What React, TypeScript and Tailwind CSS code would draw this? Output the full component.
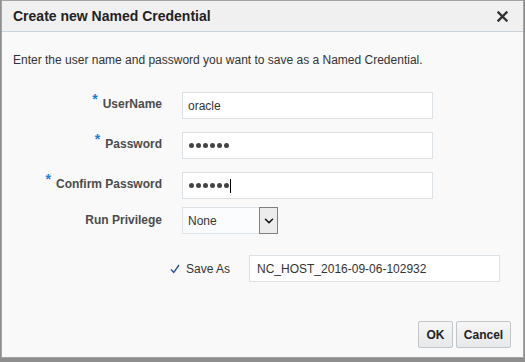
import { ChevronDown } from "lucide-react";

const font = { fontFamily: '"Liberation Sans", Arial, sans-serif' };

function Required() {
  return (
    <span className="relative -top-[4px] mr-[5px] text-[14px] font-bold text-[#1f7fd8]">*</span>
  );
}

function Dots({ count }: { count: number }) {
  return (
    <div className="flex items-center gap-[2px]">
      {Array.from({ length: count }).map((_, i) => (
        <span key={i} className="w-[5px] h-[5px] rounded-full bg-[#444]" />
      ))}
    </div>
  );
}

function FormRow({
  label,
  required,
  children,
}: {
  label: string;
  required?: boolean;
  children: React.ReactNode;
}) {
  return (
    <div className="flex items-center">
      <div
        className={
          required
            ? "relative -top-[2px] w-[149px] flex justify-end items-center text-[12px] font-bold text-[#4c4c4c]"
            : "relative -top-[1px] w-[149px] flex justify-end items-center text-[12px] font-bold text-[#4c4c4c]"
        }
      >
        {required && <Required />}
        <span>{label}</span>
      </div>
      <div className="ml-[20px]">{children}</div>
    </div>
  );
}

export default function App() {
  return (
    <div className="w-[525px] h-[362px] bg-[#8e8e8e] px-[1px] pb-[4px]" style={font}>
      <div className="h-[358px] flex flex-col border border-[#a3a3a3] bg-[#f9f9f9]">
        {/* Header */}
        <div className="h-[31px] shrink-0 flex items-center justify-between pl-[11px] pr-[15px] bg-[#f0f0f0] border-b border-[#cbd3da]">
          <span className="text-[14px] font-bold text-[#222]">Create new Named Credential</span>
          <svg width="11" height="11" viewBox="0 0 11 11">
            <path d="M1.5 1.5 L9.5 9.5 M9.5 1.5 L1.5 9.5" stroke="#333" strokeWidth="2.4" strokeLinecap="square" />
          </svg>
        </div>

        {/* Body */}
        <div className="flex-1 flex flex-col pl-[11px] pt-[21px]">
          <p className="text-[12px] leading-[14px] text-[#333]">
            Enter the user name and password you want to save as a Named Credential.
          </p>

          <div className="flex flex-col mt-[25px] gap-[13px]">
            <FormRow label="UserName" required>
              <div className="w-[251px] h-[27px] flex items-center pl-[5px] bg-white border border-[#dde2e6] text-[12px] text-[#333]">
                oracle
              </div>
            </FormRow>
            <FormRow label="Password" required>
              <div className="w-[251px] h-[27px] flex items-center pl-[6px] bg-white border border-[#dde2e6]">
                <Dots count={6} />
              </div>
            </FormRow>
            <FormRow label="Confirm Password" required>
              <div className="w-[251px] h-[27px] flex items-center pl-[6px] bg-white border border-[#dde2e6]">
                <Dots count={6} />
                <span className="ml-[1px] w-[1px] h-[14px] bg-black" />
              </div>
            </FormRow>
          </div>

          <div className="mt-[8px]">
            <FormRow label="Run Privilege">
              <div className="w-[96px] h-[27px] flex bg-[#fbfcfd] border border-[#dde2e6]">
                <span className="flex-1 flex items-center pl-[5px] text-[12px] text-[#333]">None</span>
                <span className="w-[19px] -my-[1px] -mr-[1px] flex items-center justify-center bg-[#ececec] border border-[#808080]">
                  <ChevronDown size={14} strokeWidth={2.6} color="#111" />
                </span>
              </div>
            </FormRow>
          </div>

          <div className="flex items-center mt-[21px] pl-[157px]">
            <svg width="10" height="10" viewBox="0 0 10 10">
              <path d="M1 5.5 L3.8 8.5 L9 1" fill="none" stroke="#2f4f8f" strokeWidth="1.4" />
            </svg>
            <span className="ml-[6px] text-[12px] text-[#333]">Save As</span>
            <div className="ml-[19px] w-[251px] h-[27px] flex items-center pl-[7px] bg-white border border-[#dde2e6] text-[12px] text-[#333]">
              NC_HOST_2016-09-06-102932
            </div>
          </div>

          <div className="flex justify-end gap-[3px] mt-[39px] pr-[12px]">
            <button className="w-[35px] h-[27px] rounded-[2px] border border-[#c3c6c9] bg-gradient-to-b from-[#f6f6f6] to-[#e7e8e9] text-[12px] font-bold text-[#222]">
              OK
            </button>
            <button className="w-[55px] h-[27px] rounded-[2px] border border-[#c3c6c9] bg-gradient-to-b from-[#f6f6f6] to-[#e7e8e9] text-[12px] font-bold text-[#222]">
              Cancel
            </button>
          </div>
        </div>
      </div>
    </div>
  );
}
